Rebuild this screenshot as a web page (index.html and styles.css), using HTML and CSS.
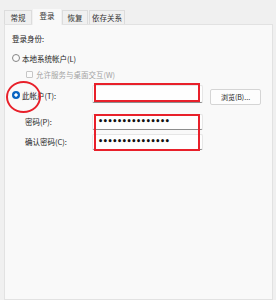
FILE: index.html
```html
<!DOCTYPE html>
<html lang="zh-CN">
<head>
<meta charset="utf-8">
<link rel="stylesheet" href="styles.css">
</head>
<body>
<div class="tabs">
  <div class="tab t1">常规</div>
  <div class="tab t2 active">登录</div>
  <div class="tab t3">恢复</div>
  <div class="tab t4">依存关系</div>
</div>
<div class="panel">
  <div class="heading">登录身份:</div>
  <div class="option">
    <span class="radio"></span><span>本地系统帐户(L)</span>
  </div>
  <div class="option sub disabled">
    <span class="check"></span><span>允许服务与桌面交互(W)</span>
  </div>
  <div class="form">
    <div class="option account">
      <span class="radio on"></span><span>此帐户(T):</span>
      <span class="ring"></span>
    </div>
    <div class="input acct"></div>
    <div class="btn">浏览(B)...</div>
    <span class="mark mark-account"></span>

    <div class="label r2">密码(P):</div>
    <div class="input pw r2">•••••••••••••••</div>
    <div class="label r3">确认密码(C):</div>
    <div class="input pw r3">•••••••••••••••</div>
    <span class="mark mark-pw"></span>
  </div>
</div>
</body>
</html>
```

FILE: styles.css
```css
* { box-sizing: border-box; }
html, body { margin: 0; height: 100%; }
body {
  background: #f0f0f0;
  font-family: "Noto Sans CJK SC", "Noto Sans", sans-serif;
  font-size: 7.5px;
  color: #222;
  overflow: hidden;
}
.tabs {
  display: flex;
  align-items: flex-end;
  height: 24px;
  padding-left: 4px;
  position: relative;
  z-index: 1;
}
.tab {
  height: 14px;
  line-height: 13px;
  padding: 0;
  border: 1px solid #dcdcdc;
  border-bottom: none;
  background: #f0f0f0;
  color: #333;
  text-align: center;
  white-space: nowrap;
}
.t1 { width: 28px; }
.t2 { width: 30px; }
.t3 { width: 26px; }
.t4 { width: 36px; margin-left: 1px; }
.tab.active {
  height: 17px;
  line-height: 14px;
  background: #f9f9f9;
  border-color: #f0f0f0;
  margin-bottom: -1px;
}
.panel {
  margin: 0 3px 0 4px;
  height: 276px;
  background: #f9f9f9;
  border: 1px solid #e2e2e2;
  padding: 8px 7px;
}
.heading {
  line-height: 12px;
  height: 12px;
  margin-bottom: 7px;
}
.option {
  display: flex;
  align-items: center;
  height: 12px;
  gap: 2px;
  margin-bottom: 4px;
}
.option.sub { padding-left: 14px; }
.disabled { color: #a3a3a3; }
.radio {
  width: 8px;
  height: 8px;
  border-radius: 50%;
  border: 1px solid #858585;
  background: #fbfbfb;
  flex: none;
}
.radio.on {
  border: none;
  background: radial-gradient(circle, #fff 0 1.4px, #0a64c2 1.9px);
}
.check {
  width: 7px;
  height: 7px;
  border: 1px solid #c6c6c6;
  border-radius: 1px;
  background: #fbfbfb;
  flex: none;
  margin-right: 1px;
}
.form {
  position: relative;
  display: grid;
  grid-template-columns: 73px 111px 51px;
  grid-template-rows: 18px 23px 16px;
  column-gap: 7px;
  row-gap: 4px;
  align-items: end;
  margin-top: 5px;
}
.form .option { margin: 0; height: 18px; position: relative; top: 1px; }
.ring {
  position: absolute;
  left: -6px;
  top: -5px;
  width: 35px;
  height: 32px;
  border: 2px solid #e8202a;
  border-radius: 50%;
}
.input {
  height: 18px;
  background: #fefefe;
  border: 1px solid #e6e6e6;
  border-bottom-color: #8d8d8d;
  border-radius: 2px;
}
.acct { grid-column: 2; grid-row: 1; }
.btn { grid-column: 3; grid-row: 1; }
.label.r2 { grid-column: 1; grid-row: 2; }
.label.r3 { grid-column: 1; grid-row: 3; }
.pw.r2 { grid-column: 2; grid-row: 2; }
.pw.r3 { grid-column: 2; grid-row: 3; }
.input.pw {
  height: 16px;
  font-family: "DejaVu Sans", sans-serif;
  font-size: 8px;
  font-weight: bold;
  letter-spacing: -0.35px;
  line-height: 14px;
  padding-left: 5px;
  color: #111;
  white-space: nowrap;
  overflow: hidden;
}
.btn {
  height: 16px;
  align-self: start;
  margin-top: 4px;
  background: #fdfdfd;
  border: 1px solid #d5d5d5;
  border-radius: 2px;
  text-align: center;
  line-height: 14px;
  font-size: 7px;
}
.label {
  padding-left: 13px;
  line-height: 16px;
}
.mark {
  position: absolute;
  border: 2px solid #e8202a;
}
.mark-account {
  grid-column: 2;
  grid-row: 1;
  left: 2px;
  top: -2px;
  width: 106px;
  height: 19px;
}
.mark-pw {
  grid-column: 2;
  grid-row: 2 / span 2;
  left: 2px;
  top: 7px;
  width: 106px;
  height: 37px;
}
```
